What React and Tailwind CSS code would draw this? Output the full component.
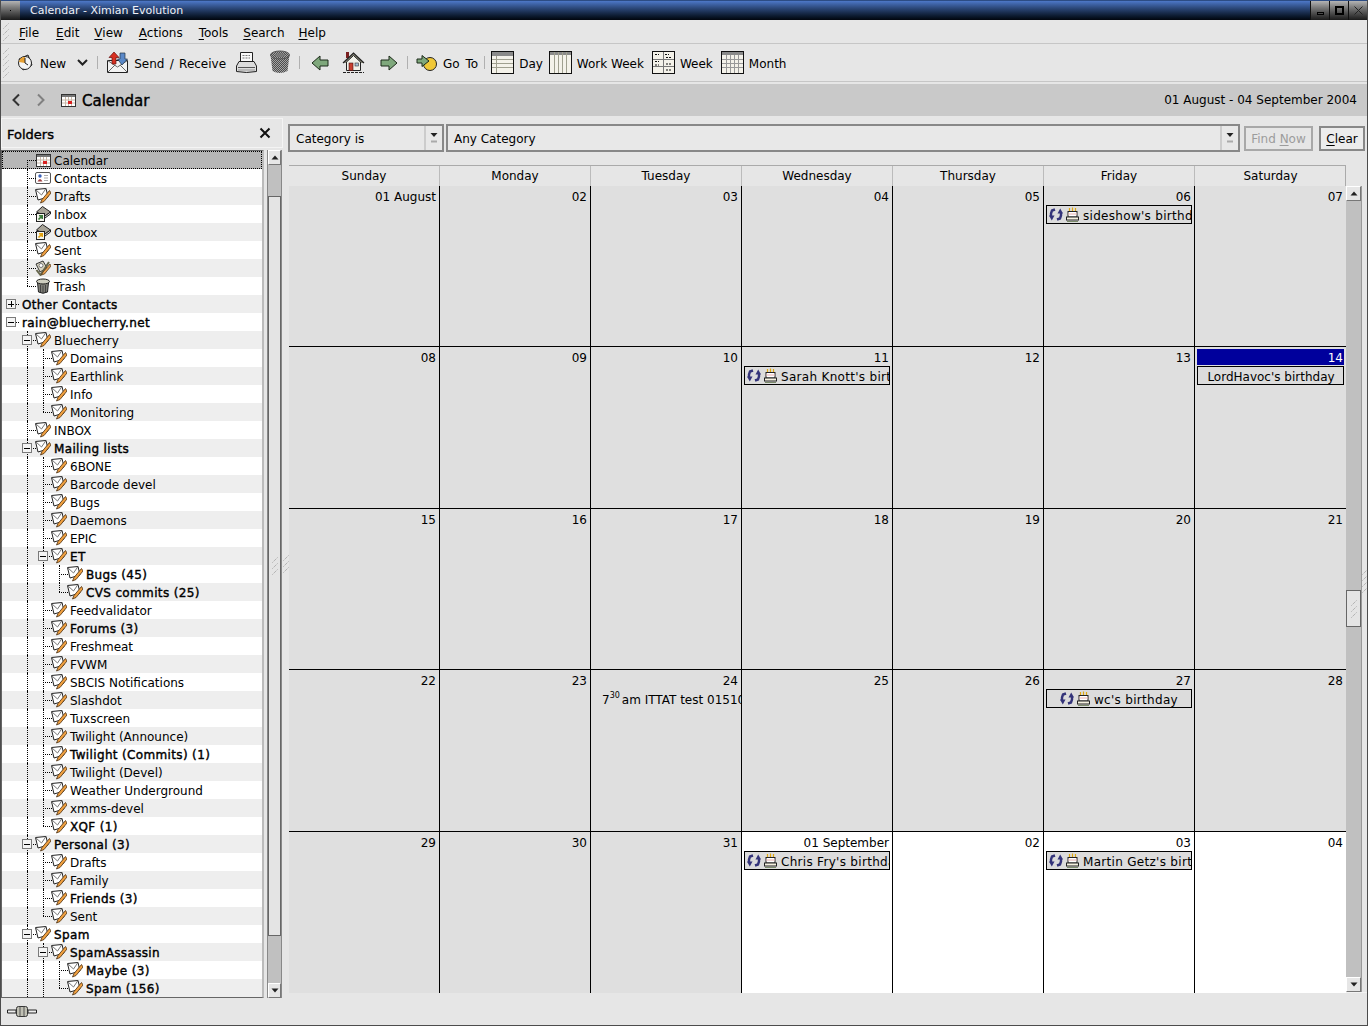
import React from 'react';

const font = { fontFamily: '"DejaVu Sans", sans-serif' };

// the toolkit fakes bold by thickening the regular face, so widths stay close to regular
const fakeBold = '[-webkit-text-stroke:0.4px_black] tracking-[0.35px]';

// folder tree as shown in the shortcut pane
const folder = (label, icon = 'mail', extra = {}) => ({ label, icon, ...extra });
const unread = (label, extra = {}) => folder(label, 'mail', { bold: true, ...extra });

const tree = [
  {
    hidden: true,
    children: [
      folder('Calendar', 'calendar', { selected: true }),
      folder('Contacts', 'contacts'),
      folder('Drafts'),
      folder('Inbox', 'inbox'),
      folder('Outbox', 'outbox'),
      folder('Sent'),
      folder('Tasks', 'tasks'),
      folder('Trash', 'trash'),
    ],
  },
  { label: 'Other Contacts', bold: true, closed: true, children: [] },
  {
    label: 'rain@bluecherry.net',
    bold: true,
    children: [
      folder('Bluecherry', 'mail', {
        children: [folder('Domains'), folder('Earthlink'), folder('Info'), folder('Monitoring')],
      }),
      folder('INBOX'),
      unread('Mailing lists', {
        children: [
          folder('6BONE'),
          folder('Barcode devel'),
          folder('Bugs'),
          folder('Daemons'),
          folder('EPIC'),
          unread('ET', { more: true, children: [unread('Bugs (45)'), unread('CVS commits (25)')] }),
          folder('Feedvalidator'),
          unread('Forums (3)'),
          folder('Freshmeat'),
          folder('FVWM'),
          folder('SBCIS Notifications'),
          folder('Slashdot'),
          folder('Tuxscreen'),
          folder('Twilight (Announce)'),
          unread('Twilight (Commits) (1)'),
          folder('Twilight (Devel)'),
          folder('Weather Underground'),
          folder('xmms-devel'),
          unread('XQF (1)'),
        ],
      }),
      unread('Personal (3)', {
        children: [folder('Drafts'), folder('Family'), unread('Friends (3)'), folder('Sent')],
      }),
      unread('Spam', {
        more: true,
        children: [
          unread('SpamAssassin', { more: true, children: [unread('Maybe (3)'), unread('Spam (156)')] }),
        ],
      }),
    ],
  },
];

function flatten(nodes, level, guides, out = [], open = false) {
  nodes.forEach((node, i) => {
    const last = i === nodes.length - 1 && !node.more && !open;
    if (node.hidden) {
      flatten(node.children, level + 1, [...guides, false], out);
      return;
    }
    out.push({ ...node, level, guides, last });
    if (node.children && node.children.length) {
      flatten(node.children, level + 1, [...guides, level > 0 && !last], out, node.label === 'rain@bluecherry.net');
    }
  });
  return out;
}

const rows = flatten(tree, 0, []);

const weeks = [
  [{ d: '01 August' }, { d: '02' }, { d: '03' }, { d: '04' }, { d: '05' }, { d: '06', ev: "sideshow's birthday", icons: true }, { d: '07' }],
  [{ d: '08' }, { d: '09' }, { d: '10' }, { d: '11', ev: "Sarah Knott's birthday", icons: true }, { d: '12' }, { d: '13' }, { d: '14', today: true, ev: "LordHavoc's birthday" }],
  [{ d: '15' }, { d: '16' }, { d: '17' }, { d: '18' }, { d: '19' }, { d: '20' }, { d: '21' }],
  [{ d: '22' }, { d: '23' }, { d: '24', timed: true }, { d: '25' }, { d: '26' }, { d: '27', ev: "wc's birthday", icons: true, center: true }, { d: '28' }],
  [{ d: '29' }, { d: '30' }, { d: '31' }, { d: '01 September', next: true, ev: "Chris Fry's birthday", icons: true }, { d: '02', next: true }, { d: '03', next: true, ev: "Martin Getz's birthday", icons: true }, { d: '04', next: true }],
];

const dayNames = ['Sunday', 'Monday', 'Tuesday', 'Wednesday', 'Thursday', 'Friday', 'Saturday'];

function Grip({ className = '', count = 3 }) {
  return (
    <svg className={`shrink-0 ${className}`} width="6" height={count * 6 + 2} viewBox={`0 0 6 ${count * 6 + 2}`}>
      {Array.from({ length: count }).map((_, i) => (
        <path key={i} d={`M0.5 ${i * 6 + 6.5} L5.5 ${i * 6 + 1.5}`} stroke="#9a9a9a" strokeWidth="1" strokeDasharray="1 1" fill="none" />
      ))}
    </svg>
  );
}

function MailIcon() {
  return (
    <svg className="shrink-0" width="16" height="16" viewBox="0 0 16 16">
      <path d="M0.5 1.5 L11 0.5 L13 9 L3 12 Z" fill="#fff" stroke="#222" />
      <path d="M0.5 1.5 L6.5 7 L11 0.5" fill="none" stroke="#777" />
      <path d="M14.5 2.5 L7 11.5 L5.5 15 L9 13.5 L16 5 Z" fill="#f0a040" stroke="#4a2f10" strokeWidth="0.8" />
    </svg>
  );
}

function CalendarIcon() {
  return (
    <svg className="shrink-0" width="15" height="13" viewBox="0 0 15 13">
      <rect x="0.5" y="0.5" width="14" height="12" fill="#fff" stroke="#333" />
      <rect x="1" y="1" width="13" height="2" fill="#777" />
      <path d="M1 6 H14 M1 9 H14 M4.5 3 V12 M7.5 3 V12 M10.5 3 V12" stroke="#c8b8a8" />
      <rect x="7" y="7" width="4" height="3" fill="#d82020" />
    </svg>
  );
}

function ContactsIcon() {
  return (
    <svg className="shrink-0" width="16" height="14" viewBox="0 0 16 14">
      <rect x="0.5" y="1.5" width="15" height="11" rx="1.5" fill="#fff" stroke="#555" />
      <circle cx="5" cy="5" r="1.7" fill="#3860b8" />
      <path d="M2.5 10.5 Q5 5.5 7.5 10.5 Z" fill="#a04040" />
      <path d="M9 4.5 H13 M9 7 H13 M9 9.5 H13" stroke="#aaa" />
    </svg>
  );
}

function BoxIcon({ arrow }) {
  return (
    <svg className="shrink-0" width="16" height="16" viewBox="0 0 16 16">
      <path d="M1.5 6 L7.5 0.5 L15.5 6 L10 10 Z" fill="#a8a498" stroke="#222" />
      <path d="M10 10 L15.5 6 V8 L10 12" fill="#ddd" stroke="#222" />
      <rect x="1.5" y="7.5" width="8" height="8" fill="#f4f4ec" stroke="#222" />
      <path d="M3.5 13.5 L7 10 M4 9.8 H7.2 V13" stroke={arrow} strokeWidth="1.6" fill="none" />
    </svg>
  );
}

function TasksIcon() {
  return (
    <svg className="shrink-0" width="16" height="16" viewBox="0 0 16 16">
      <path d="M1 4 L8 1 L12 8 L5 12 Z" fill="#d8d4c0" stroke="#333" />
      <circle cx="6" cy="5.5" r="2" fill="#fff" stroke="#777" />
      <path d="M1.5 10 L5.5 15 L14 2" fill="none" stroke="#66664c" strokeWidth="2" />
      <path d="M15 4 L8 12 L6.5 15 L9.5 14 L16 6 Z" fill="#e8a050" stroke="#4a2f10" strokeWidth="0.7" />
    </svg>
  );
}

function TrashIcon() {
  return (
    <svg className="shrink-0" width="16" height="16" viewBox="0 0 16 16">
      <path d="M2.5 4.5 L3.5 14 Q8 16.5 12.5 14 L13.5 4.5 Z" fill="#808078" stroke="#222" />
      <ellipse cx="8" cy="3.5" rx="6.5" ry="2.5" fill="#cfcfc0" stroke="#222" />
      <path d="M5.5 7 V14 M8 7.5 V15 M10.5 7 V14" stroke="#444" />
    </svg>
  );
}

function FolderIcon({ icon }) {
  if (icon === 'calendar') return <CalendarIcon />;
  if (icon === 'contacts') return <ContactsIcon />;
  if (icon === 'inbox') return <BoxIcon arrow="#3a7a3a" />;
  if (icon === 'outbox') return <BoxIcon arrow="#e0a010" />;
  if (icon === 'tasks') return <TasksIcon />;
  if (icon === 'trash') return <TrashIcon />;
  return <MailIcon />;
}

function Toggle({ closed }) {
  return (
    <span className="absolute left-[3px] top-[4px] z-10 flex h-[10px] w-[10px] items-center justify-center border border-[#7a7a7a] bg-[#f4f4f4]">
      <span className="absolute h-px w-[6px] bg-black" />
      {closed && <span className="absolute h-[6px] w-px bg-black" />}
    </span>
  );
}

function TreeRow({ row, index }) {
  const { label, level, bold, icon, selected, closed, children, guides, last } = row;
  const band = index % 2 === 0 ? 'bg-[#eeeeee]' : 'bg-white';
  const hasToggle = closed || (children && children.length > 0);
  return (
    <div
      className={`flex h-[18px] shrink-0 items-center pl-px text-[12px] leading-none text-black ${
        selected ? 'bg-[#b7b7b7] outline-1 -outline-offset-1 outline-dotted outline-black' : band
      } ${bold ? fakeBold : ''}`}
    >
      {guides.map((on, i) => (
        <span key={i} className="relative h-full w-4 shrink-0">
          {on && <span className="absolute bottom-0 left-2 top-0 border-l border-dotted border-black" />}
        </span>
      ))}
      <span className="relative h-full w-4 shrink-0">
        {level > 0 && (
          <>
            <span
              className={`absolute left-2 border-l border-dotted border-black ${
                selected ? 'top-[9px] h-[9px]' : last ? 'top-0 h-[9px]' : 'top-0 h-full'
              }`}
            />
            <span className="absolute left-2 top-[9px] w-[9px] border-t border-dotted border-black" />
          </>
        )}
        {hasToggle && <Toggle closed={closed} />}
        {level === 0 && <span className="absolute left-[13px] top-[9px] w-[3px] border-t border-dotted border-black" />}
      </span>
      {icon && (
        <span className="flex h-[18px] w-4 shrink-0 items-center justify-center">
          <FolderIcon icon={icon} />
        </span>
      )}
      <span className="ml-[3px] whitespace-nowrap pt-[2px]">{label}</span>
    </div>
  );
}

function ScrollButton({ down }) {
  return (
    <div className="flex h-[15px] w-full shrink-0 items-center justify-center border border-t-white border-l-white border-r-[#777] border-b-[#777] bg-[#e6e6e6]">
      <svg width="8" height="5" viewBox="0 0 8 5">
        <path d={down ? 'M0.5 0.5 H7.5 L4 4.5 Z' : 'M0.5 4.5 H7.5 L4 0.5 Z'} fill="#222" />
      </svg>
    </div>
  );
}

function Thumb({ className }) {
  return (
    <div className={`flex w-full shrink-0 items-center justify-center border border-[#666] bg-[#e4e4e4] ${className}`}>
      <Grip />
    </div>
  );
}

function BirthdayIcons() {
  return (
    <>
      <svg className="shrink-0" width="14" height="13" viewBox="0 0 14 13">
        <path d="M6 1.5 L3 2.5 L2 5.5 V9" fill="none" stroke="#34347a" strokeWidth="2.4" />
        <path d="M0 7.5 H5.5 L2.8 12.5 Z" fill="#34347a" />
        <path d="M8 11.5 L11 10.5 L12 7.5 V4" fill="none" stroke="#34347a" strokeWidth="2.4" />
        <path d="M14 5.5 H8.5 L11.2 0.5 Z" fill="#34347a" />
      </svg>
      <svg className="ml-[3px] shrink-0" width="13" height="15" viewBox="0 0 13 15">
        <path d="M3.5 1 V4 M6.5 0.5 V4 M9.5 1 V4" stroke="#e0a810" strokeWidth="1.2" />
        <rect x="2" y="4.5" width="9" height="5.5" fill="#fff" stroke="#222" />
        <path d="M2 7 H11" stroke="#e8b0b0" />
        <rect x="0.5" y="10" width="12" height="3" fill="#f4f0e0" stroke="#222" />
        <path d="M1 14.5 H12" stroke="#7a8a6a" />
      </svg>
    </>
  );
}

function EventBox({ text, icons, center }) {
  return (
    <div className="mx-[2px] flex h-[19px] items-center overflow-hidden border border-black bg-[#dcdcdc] pl-[2px] pr-px text-[12px] leading-none">
      {center && <span className="w-[11px] shrink-0" />}
      {icons && <BirthdayIcons />}
      <span className={`whitespace-nowrap pt-[2px] ${icons ? 'ml-[4px] tracking-[0.3px]' : 'w-full text-center'}`}>{text}</span>
    </div>
  );
}

function DayCell({ cell, lastCol, lastRow }) {
  return (
    <div
      className={`min-w-0 overflow-hidden ${cell.next ? 'bg-white' : 'bg-[#dfdfdf]'} ${lastCol ? '' : 'border-r border-black'} ${
        lastRow ? '' : 'border-b border-black'
      }`}
    >
      {cell.today ? (
        <div className="mx-[2px] mt-[2px] h-[16px] bg-[#00009c] pr-px pt-px text-right text-[12px] leading-[16px] text-white">{cell.d}</div>
      ) : (
        <div className="mt-[2px] h-[16px] pr-[3px] pt-px text-right text-[12px] leading-[16px] text-black">{cell.d}</div>
      )}
      {cell.ev && (
        <div className="mt-px">
          <EventBox text={cell.ev} icons={cell.icons} center={cell.center} />
        </div>
      )}
      {cell.timed && (
        <div className="mt-[2px] flex h-[19px] items-center whitespace-nowrap pl-[11px] text-[12px] leading-none">
          7<sup className="text-[8px] leading-none">30</sup>
          <span className="ml-[2px]">am ITTAT test 015100</span>
        </div>
      )}
    </div>
  );
}

function Separator({ className = '' }) {
  return <span className={`h-[13px] w-px shrink-0 bg-[#b0b0b0] ${className}`} />;
}

function ViewIcon({ kind, className = '' }) {
  return (
    <svg className={`shrink-0 ${className}`} width="23" height="23" viewBox="0 0 23 23">
      <rect x="0.5" y="0.5" width="22" height="22" fill="#f4f2ea" stroke="#111" />
      {kind === 'day' && (
        <>
          <rect x="1" y="1" width="21" height="4" fill="#8a8a8a" />
          <path d="M1 8.5 H22 M1 12.5 H22 M1 16.5 H22 M5.5 5 V22" stroke="#a0a090" />
        </>
      )}
      {kind === 'workweek' && (
        <>
          <rect x="1" y="1" width="21" height="3" fill="#8a8a8a" />
          <path d="M5.5 1 V22 M9.5 1 V22 M13.5 1 V22 M17.5 1 V22" stroke="#a0a090" />
        </>
      )}
      {kind === 'week' && (
        <>
          <path d="M11.5 1 V22 M1 8.5 H22 M1 15.5 H22" stroke="#777" />
          <path d="M3 3.5 H7 M13 3.5 H17 M3 10.5 H7 M14 6.5 H20 M3 14 H7 M14 13 H20 M14 19 H20" stroke="#111" strokeDasharray="2 1" />
        </>
      )}
      {kind === 'month' && (
        <>
          <rect x="1" y="1" width="21" height="3" fill="#8a8a8a" />
          <path d="M1 8.5 H22 M1 12.5 H22 M1 16.5 H22 M5.5 4 V22 M9.5 4 V22 M13.5 4 V22 M17.5 4 V22" stroke="#999" />
        </>
      )}
    </svg>
  );
}

function NewIcon() {
  return (
    <svg className="shrink-0" width="18" height="20" viewBox="0 0 18 20">
      <path d="M3 6 L12 2 L16 12 L7 17 Z" fill="#e4e4e4" stroke="#222" />
      <circle cx="9" cy="10" r="6.5" fill="#f4f4f4" stroke="#222" />
      <path d="M9 10 L3 9 A6 6 0 0 1 9 4 Z" fill="#e8a030" />
      <path d="M9 5 V10 L12 12" stroke="#222" fill="none" />
    </svg>
  );
}

function SendReceiveIcon() {
  return (
    <svg className="shrink-0" width="23" height="23" viewBox="0 0 23 23">
      <path d="M1.5 9.5 H21.5 V21.5 H1.5 Z" fill="#f2f2f2" stroke="#222" />
      <path d="M1.5 9.5 L11.5 16 L21.5 9.5 M1.5 21.5 L9 14 M21.5 21.5 L14 14" fill="none" stroke="#666" />
      <path d="M8 1 L3 6.5 H6 V13 H10 V6.5 H13 Z" fill="#d83020" stroke="#611" strokeWidth="0.7" />
      <path d="M16 14 L11.5 8 H14 V2 H19 V8 H21.5 Z" fill="#5a88c8" stroke="#234" strokeWidth="0.7" />
    </svg>
  );
}

function PrinterIcon() {
  return (
    <svg className="shrink-0" width="23" height="23" viewBox="0 0 23 23">
      <path d="M5.5 1.5 H17.5 V11 H5.5 Z" fill="#fafafa" stroke="#222" />
      <path d="M7.5 4.5 H15 M7.5 7 H15" stroke="#777" strokeDasharray="2 1" />
      <path d="M4 10.5 H19 L21.5 15 V20.5 Q11.5 22.5 1.5 20.5 V15 Z" fill="#dcdcdc" stroke="#222" />
      <path d="M3 16.5 H20" stroke="#555" />
      <path d="M3 19 H20" stroke="#999" />
    </svg>
  );
}

function BinIcon() {
  return (
    <svg className="shrink-0" width="22" height="25" viewBox="0 0 22 25">
      <defs>
        <pattern id="mesh" width="2" height="2" patternUnits="userSpaceOnUse">
          <rect width="2" height="2" fill="#a4a4a4" />
          <rect width="1" height="1" fill="#4c4c4c" />
          <rect x="1" y="1" width="1" height="1" fill="#4c4c4c" />
        </pattern>
      </defs>
      <path d="M1.5 5 L3.5 21 Q10.5 25 18.5 21 L20.5 5 Z" fill="url(#mesh)" />
      <ellipse cx="11" cy="5" rx="9.5" ry="4" fill="url(#mesh)" stroke="#555" />
      <ellipse cx="11" cy="5" rx="5" ry="1.8" fill="#777" />
    </svg>
  );
}

function ArrowIcon({ right }) {
  return (
    <svg className="shrink-0" width="18" height="16" viewBox="0 0 18 16">
      <path
        d={right ? 'M1 5 H9 V1 L17 8 L9 15 V11 H1 Z' : 'M17 5 H9 V1 L1 8 L9 15 V11 H17 Z'}
        fill="#7fa87c"
        stroke="#1d2b1a"
      />
    </svg>
  );
}

function HomeIcon() {
  return (
    <svg className="shrink-0" width="23" height="23" viewBox="0 0 23 23">
      <rect x="4" y="1" width="3" height="6" fill="#7a2020" />
      <path d="M1 12 L11.5 2 L22 12" fill="#8a8a7a" stroke="#222" strokeWidth="1.2" />
      <path d="M4.5 11 V19.5 H18.5 V11 L11.5 4.5 Z" fill="#f2f2ea" stroke="#222" />
      <rect x="7" y="12" width="4" height="7.5" fill="#c84030" stroke="#411" strokeWidth="0.6" />
      <rect x="13" y="12" width="3.5" height="3" fill="#a8c0d8" stroke="#333" strokeWidth="0.6" />
      <path d="M1 21.5 H22" stroke="#222" strokeDasharray="3 1" />
    </svg>
  );
}

function GoToIcon() {
  return (
    <svg className="shrink-0" width="22" height="18" viewBox="0 0 22 18">
      <circle cx="14" cy="10" r="6.5" fill="#f0c838" stroke="#222" />
      <path d="M1 5 H6 V1.5 L13 7 L6 12.5 V9 H1 Z" fill="#7fa87c" stroke="#1d2b1a" />
    </svg>
  );
}

function MenuLabel({ accel, rest, className = 'pr-[8px]' }) {
  return (
    <span className={`pl-[8px] pt-[2px] ${className}`}>
      <span className="underline underline-offset-2">{accel}</span>
      {rest}
    </span>
  );
}

function ToolText({ children, className = '' }) {
  return <span className={`whitespace-nowrap pt-[2px] text-[12px] leading-none ${className}`}>{children}</span>;
}

function App() {
  return (
    <div
      style={font}
      className="flex h-[1026px] w-[1368px] flex-col overflow-hidden border-x border-b border-[#4c4c4c] bg-[#e6e6e6] text-black"
    >
      {/* Window title */}
      <div className="flex h-5 shrink-0 items-center border-t border-[#2c4c84] bg-gradient-to-b from-[#4d78c8] to-[#02060e]">
        <div className="flex h-full w-[19px] shrink-0 items-center justify-center bg-gradient-to-b from-[#b4b4b4] to-[#1c1c1c]">
          <span className="h-px w-px bg-black" />
        </div>
        <span className="ml-[10px] text-[11px] leading-none text-[#eef1f8]">Calendar - Ximian Evolution</span>
        <div className="ml-auto flex h-full">
          {['min', 'max', 'close'].map((b) => (
            <div key={b} className="flex h-full w-[19px] items-center justify-center border-l border-[#111] bg-gradient-to-b from-[#b4b4b4] to-[#1c1c1c]">
              {b === 'min' && <span className="mt-[6px] h-[3px] w-[7px] border border-black" />}
              {b === 'max' && <span className="h-[9px] w-[9px] border-2 border-black" />}
              {b === 'close' && (
                <svg width="9" height="9" viewBox="0 0 9 9">
                  <path d="M0.5 0.5 L8.5 8.5 M8.5 0.5 L0.5 8.5" stroke="#222" />
                </svg>
              )}
            </div>
          ))}
        </div>
      </div>

      {/* Menu bar */}
      <div className="flex h-6 shrink-0 items-center border-b border-[#c6c6c6] pl-[2px] text-[12px] leading-none">
        <Grip className="mr-[2px]" count={3} />
        <MenuLabel accel="F" rest="ile" className="pr-[9px]" />
        <MenuLabel accel="E" rest="dit" className="pr-[7px]" />
        <MenuLabel accel="V" rest="iew" />
        <MenuLabel accel="A" rest="ctions" />
        <MenuLabel accel="T" rest="ools" className="pr-[7px]" />
        <MenuLabel accel="S" rest="earch" className="pr-[6px]" />
        <MenuLabel accel="H" rest="elp" />
      </div>

      {/* Main toolbar */}
      <div className="flex h-[38px] shrink-0 items-center border-b border-[#c6c6c6] pl-[2px]">
        <Grip className="mr-[7px]" count={5} />
        <NewIcon />
        <ToolText className="ml-[6px]">New</ToolText>
        <svg className="ml-[11px] shrink-0" width="11" height="7" viewBox="0 0 11 7">
          <path d="M1 1 L5.5 5.5 L10 1" fill="none" stroke="#222" strokeWidth="2" />
        </svg>
        <Separator className="ml-[9px]" />
        <span className="ml-2" />
        <SendReceiveIcon />
        <ToolText className="ml-[5px] [word-spacing:1.5px]">Send / Receive</ToolText>
        <span className="ml-[9px]" />
        <PrinterIcon />
        <span className="ml-[11px]" />
        <BinIcon />
        <Separator className="ml-[8px]" />
        <span className="ml-[11px]" />
        <ArrowIcon />
        <span className="ml-[13px]" />
        <HomeIcon />
        <span className="ml-[15px]" />
        <ArrowIcon right />
        <Separator className="ml-[9px]" />
        <span className="ml-2" />
        <GoToIcon />
        <ToolText className="ml-[5px] [word-spacing:2px]">Go To</ToolText>
        <Separator className="ml-[6px]" />
        <ViewIcon kind="day" className="ml-[6px]" />
        <ToolText className="ml-[5px]">Day</ToolText>
        <ViewIcon kind="workweek" className="ml-[6px]" />
        <ToolText className="ml-[5px]">Work Week</ToolText>
        <ViewIcon kind="week" className="ml-2" />
        <ToolText className="ml-[5px]">Week</ToolText>
        <ViewIcon kind="month" className="ml-2" />
        <ToolText className="ml-[5px]">Month</ToolText>
      </div>

      {/* Title band */}
      <div className="mt-[2px] flex h-8 shrink-0 items-center bg-[#c9c9c9] pl-[10px] pr-[10px]">
        <svg className="shrink-0" width="10" height="14" viewBox="0 0 10 14">
          <path d="M8 1.5 L2.5 7 L8 12.5" fill="none" stroke="#333" strokeWidth="2" />
        </svg>
        <svg className="ml-[15px] shrink-0" width="10" height="14" viewBox="0 0 10 14">
          <path d="M2 1.5 L7.5 7 L2 12.5" fill="none" stroke="#808080" strokeWidth="2" />
        </svg>
        <span className="ml-[15px]">
          <CalendarIcon />
        </span>
        <span className="ml-[6px] pt-[2px] text-[15px] leading-none [-webkit-text-stroke:0.4px_black]">Calendar</span>
        <span className="ml-auto text-[12px] leading-none">01 August - 04 September 2004</span>
      </div>

      {/* Panes */}
      <div className="flex min-h-0 flex-1">
        {/* Folder pane */}
        <div className="flex w-[282px] shrink-0 flex-col pt-[2px]">
          <div className="flex h-[30px] shrink-0 items-center justify-between border border-[#f4f4f4] pl-[5px] pr-[11px] leading-none">
            <span className="pt-[2px] text-[13px] [-webkit-text-stroke:0.4px_black]">Folders</span>
            <svg width="12" height="12" viewBox="0 0 12 12">
              <path d="M1.5 1.5 L10.5 10.5 M10.5 1.5 L1.5 10.5" stroke="#111" strokeWidth="2" />
            </svg>
          </div>
          <div className="mt-[2px] flex min-h-0 flex-1">
            <div className="flex w-[263px] shrink-0 flex-col overflow-hidden border-y border-l border-[#666] border-r-2 border-r-[#bbb] bg-white">
              {rows.map((row, i) => (
                <TreeRow key={i} row={row} index={i} />
              ))}
            </div>
            <div className="ml-[3px] flex w-[15px] shrink-0 flex-col border-x border-[#888] bg-[#c0c0c0]">
              <ScrollButton />
              <div className="h-[31px]" />
              <Thumb className="h-[740px]" />
              <div className="flex-1" />
              <ScrollButton down />
            </div>
          </div>
        </div>

        {/* Calendar pane */}
        <div className="relative flex min-w-0 flex-1 flex-col pl-[5px] pt-[8px]">
          <Grip className="absolute left-0 top-[438px]" count={3} />
          <div className="flex h-[28px] shrink-0 items-center text-[12px] leading-none">
            <div className="flex h-full w-[156px] shrink-0 items-center justify-between border-2 border-[#888] bg-[#e8e8e8] pl-[6px]">
              <span className="pt-[2px]">Category is</span>
              <span className="flex h-full w-[18px] items-center justify-center border-l-2 border-[#ccc]">
                <DropArrow />
              </span>
            </div>
            <div className="ml-[2px] flex h-full w-[794px] shrink-0 items-center justify-between border-2 border-[#888] bg-[#e8e8e8] pl-[6px]">
              <span className="pt-[2px]">Any Category</span>
              <span className="flex h-full w-[18px] items-center justify-center border-l-2 border-[#ccc]">
                <DropArrow />
              </span>
            </div>
            <div className="ml-1 flex h-[25px] w-[69px] shrink-0 items-center justify-center border-2 border-[#a8a8a8] text-[#9c9c9c]">
              <span className="pt-[2px]">
                Find <span className="underline underline-offset-2">N</span>ow
              </span>
            </div>
            <div className="ml-[6px] flex h-[25px] w-[46px] shrink-0 items-center justify-center border-2 border-[#888] bg-[#ececec]">
              <span className="pt-[2px]">
                <span className="underline underline-offset-2">C</span>lear
              </span>
            </div>
          </div>

          <div className="ml-px mt-[13px] grid h-[21px] w-[1057px] shrink-0 grid-cols-[151px_151px_151px_151px_151px_151px_151px] border-r border-t border-[#aaa] text-[12px] leading-none">
            {dayNames.map((name, i) => (
              <div key={name} className={`flex items-center justify-center ${i < 6 ? 'border-r border-[#bbb]' : ''}`}>
                {name}
              </div>
            ))}
          </div>

          <div className="ml-px flex h-[807px] shrink-0 border-b border-[#f2f2f2]">
            <div className="grid h-[807px] w-[1057px] shrink-0 grid-cols-[151px_151px_151px_151px_151px_151px_151px] grid-rows-[161px_162px_161px_162px_161px]">
              {weeks.map((week, r) =>
                week.map((cell, c) => <DayCell key={`${r}-${c}`} cell={cell} lastCol={c === 6} lastRow={r === 4} />)
              )}
            </div>
            <div className="flex w-[16px] shrink-0 flex-col border-r border-[#999] bg-[#c0c0c0]">
              <ScrollButton />
              <div className="h-[389px]" />
              <Thumb className="h-[37px]" />
              <div className="flex-1" />
              <ScrollButton down />
            </div>
            <Grip className="mt-[382px]" count={4} />
          </div>
        </div>
      </div>

      {/* Status bar */}
      <div className="flex h-[27px] shrink-0 items-center pl-[6px]">
        <svg width="30" height="11" viewBox="0 0 30 11">
          <path d="M0.5 4 H9 V7 H0.5 Z M21 4 H29.5 V7 H21 Z" fill="#efefef" stroke="#222" />
          <rect x="9.5" y="0.5" width="11" height="10" rx="2" fill="#c0c0b4" stroke="#333" />
          <path d="M13 0.5 V10.5 M17 0.5 V10.5" stroke="#555" />
        </svg>
      </div>
    </div>
  );
}

function DropArrow() {
  return (
    <svg width="8" height="12" viewBox="0 0 8 12">
      <path d="M0.5 1 H7.5 L4 5 Z" fill="#222" />
      <path d="M1 9.5 H7" stroke="#aaa" strokeWidth="2" />
    </svg>
  );
}

export default App;
